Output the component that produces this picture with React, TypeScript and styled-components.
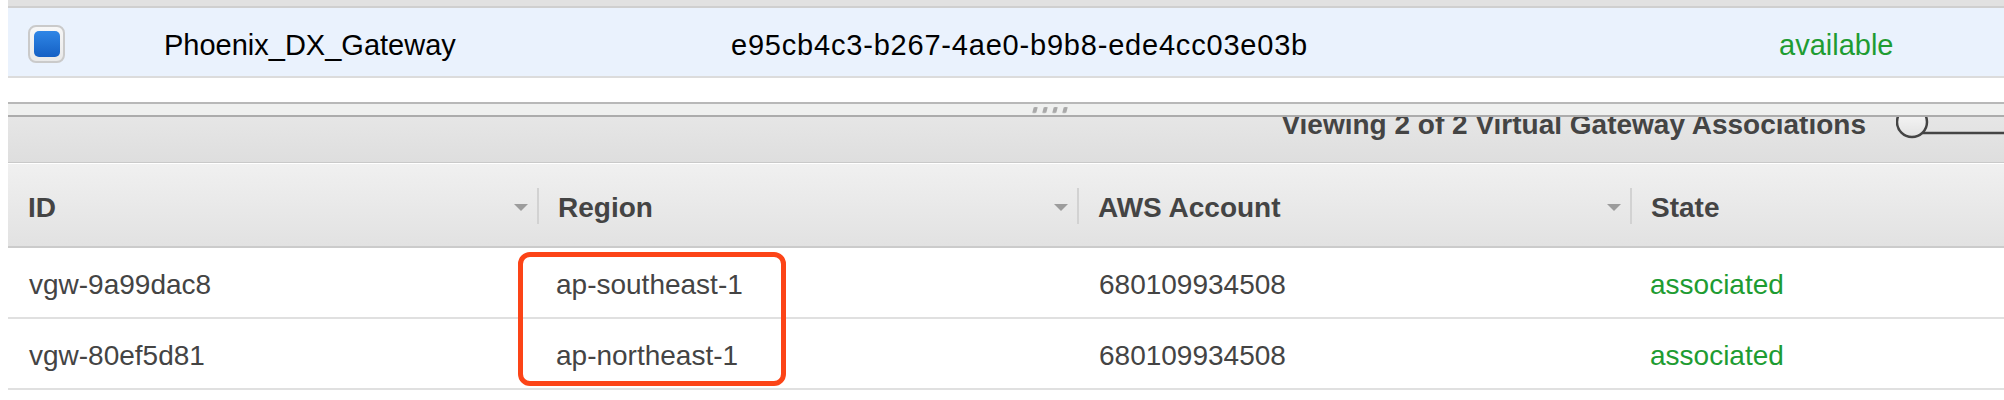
import React from 'react';
import styled, { createGlobalStyle } from 'styled-components';

const GlobalStyle = createGlobalStyle`
  html, body {
    margin: 0;
    padding: 0;
    background: #ffffff;
  }
  body {
    font-family: "Liberation Sans", Arial, Helvetica, sans-serif;
    overflow: hidden;
  }
`;

// Whole page, the 8px gutter on the left comes from the original console
const Page = styled.div`
  width: 1996px;
  padding-left: 8px;
  height: 400px;
  overflow: hidden;
`;

const TopBand = styled.div`
  height: 6px;
  background: #e1e1e1;
  border-bottom: 2px solid #cfcfcf;
`;

const SelectedRow = styled.div`
  display: grid;
  grid-template-columns: 136px 567px 1048px 1fr;
  align-items: center;
  height: 68px;
  padding-left: 20px;
  background: #eaf2fd;
  border-bottom: 2px solid #dcdcdc;
  font-size: 29px;
  color: #000;
`;

const GatewayCell = styled.div<{ $tone?: 'default' | 'ok'; $spaced?: boolean }>`
  line-height: 68px;
  padding-top: 3px;
  white-space: nowrap;
  letter-spacing: ${p => (p.$spaced ? '0.8px' : 'normal')};
  color: ${p => (p.$tone === 'ok' ? '#1e9c32' : '#000')};
`;

const CheckBox = styled.div`
  width: 33px;
  height: 34px;
  border: 2px solid #cacaca;
  border-radius: 8px;
  background: linear-gradient(#f7f7f7, #e9e9e9);
  display: flex;
  align-items: center;
  justify-content: center;
  margin-top: 1px;
`;

const CheckFill = styled.div`
  width: 26px;
  height: 26px;
  border-radius: 5px;
  background: linear-gradient(#2f86e6, #1560c4);
`;

const Spacer = styled.div`
  height: 24px;
`;

const Splitter = styled.div`
  position: relative;
  z-index: 2;
  height: 11px;
  background: #eff0ef;
  border-top: 2px solid #b8b8b8;
  border-bottom: 2px solid #acacac;
  display: flex;
  align-items: center;
  gap: 6px;
  padding-left: 1025px;
`;

const Grip = styled.span`
  width: 4px;
  height: 6px;
  background: #a9a9a9;
  border-radius: 1px;
  transform: skewX(-15deg);
  filter: blur(0.4px);
`;

const Toolbar = styled.div`
  height: 45px;
  display: flex;
  justify-content: flex-end;
  align-items: flex-start;
  overflow: hidden;
  background: linear-gradient(#e6e6e6, #dedede);
  border-bottom: 1px solid #c9c9c9;
  box-shadow: 0 1px 0 #ffffff;
  margin-bottom: 1px;
`;

const ViewingText = styled.div`
  font-size: 28px;
  font-weight: bold;
  line-height: 28px;
  color: #444;
  margin-top: -6px;
  white-space: nowrap;
`;

const ToggleArt = styled.svg`
  flex-shrink: 0;
  margin-left: 30px;
  display: block;
`;

const HeaderRow = styled.div`
  display: grid;
  grid-template-columns: 529px 540px 553px 1fr;
  height: 82px;
  background: linear-gradient(#f0f0f0, #e2e2e2);
  border-bottom: 2px solid #cbcbcb;
`;

const HeaderCell = styled.div<{ $divider?: boolean; $first?: boolean }>`
  position: relative;
  display: flex;
  align-items: center;
  justify-content: space-between;
  padding-left: ${p => (p.$first ? '20px' : '21px')};
  padding-right: 9px;
  padding-top: 6px;
  font-size: 28px;
  font-weight: bold;
  color: #444;

  &::before {
    content: '';
    display: ${p => (p.$divider ? 'block' : 'none')};
    position: absolute;
    left: 0;
    top: 24px;
    width: 2px;
    height: 36px;
    background: #d2d2d2;
  }
`;

const SortArrow = styled.span`
  width: 0;
  height: 0;
  border-left: 7px solid transparent;
  border-right: 7px solid transparent;
  border-top: 7px solid #9c9c9c;
  margin-top: -2px;
`;

const Body = styled.div`
  position: relative;
`;

const DataRow = styled.div`
  display: grid;
  grid-template-columns: 529px 540px 553px 1fr;
  height: 69px;
  border-bottom: 2px solid #e0e0e0;
`;

const DataCell = styled.div<{ $tone?: 'default' | 'ok'; $pad: number }>`
  padding-left: ${p => p.$pad}px;
  line-height: 65px;
  padding-top: 4px;
  font-size: 28px;
  white-space: nowrap;
  color: ${p => (p.$tone === 'ok' ? '#1e9c32' : '#444')};
`;

// Annotation drawn over the Region column
const Highlight = styled.div`
  position: absolute;
  left: 510px;
  top: 4px;
  width: 258px;
  height: 124px;
  border: 5px solid #fc4417;
  border-radius: 12px;
  pointer-events: none;
`;

const associations = [
  { id: 'vgw-9a99dac8', region: 'ap-southeast-1', account: '680109934508', state: 'associated' },
  { id: 'vgw-80ef5d81', region: 'ap-northeast-1', account: '680109934508', state: 'associated' },
];

const columns = ['ID', 'Region', 'AWS Account', 'State'];

export default function App() {
  return (
    <>
      <GlobalStyle />
      <Page>
        <TopBand />
        <SelectedRow>
          <CheckBox>
            <CheckFill />
          </CheckBox>
          <GatewayCell>Phoenix_DX_Gateway</GatewayCell>
          <GatewayCell $spaced>e95cb4c3-b267-4ae0-b9b8-ede4cc03e03b</GatewayCell>
          <GatewayCell $tone="ok">available</GatewayCell>
        </SelectedRow>
        <Spacer />
        <Splitter>
          <Grip />
          <Grip />
          <Grip />
          <Grip />
        </Splitter>
        <Toolbar>
          <ViewingText>Viewing 2 of 2 Virtual Gateway Associations</ViewingText>
          <ToggleArt width="108" height="45" viewBox="0 0 108 45">
            <defs>
              <linearGradient id="knob" x1="0" y1="0" x2="0" y2="1">
                <stop offset="0" stopColor="#fbfbfb" />
                <stop offset="1" stopColor="#e2e2e2" />
              </linearGradient>
            </defs>
            <rect x="2" y="-22" width="220" height="38" rx="19" fill="none" stroke="#444" strokeWidth="2.5" />
            <circle cx="16" cy="5" r="15" fill="url(#knob)" stroke="#444" strokeWidth="2.5" />
          </ToggleArt>
        </Toolbar>
        <HeaderRow>
          {columns.map((c, i) => (
            <HeaderCell key={c} $first={i === 0} $divider={i > 0}>
              <span>{c}</span>
              {i < columns.length - 1 && <SortArrow />}
            </HeaderCell>
          ))}
        </HeaderRow>
        <Body>
          {associations.map(a => (
            <DataRow key={a.id}>
              <DataCell $pad={21}>{a.id}</DataCell>
              <DataCell $pad={19}>{a.region}</DataCell>
              <DataCell $pad={22}>{a.account}</DataCell>
              <DataCell $pad={20} $tone="ok">{a.state}</DataCell>
            </DataRow>
          ))}
          <Highlight />
        </Body>
      </Page>
    </>
  );
}
